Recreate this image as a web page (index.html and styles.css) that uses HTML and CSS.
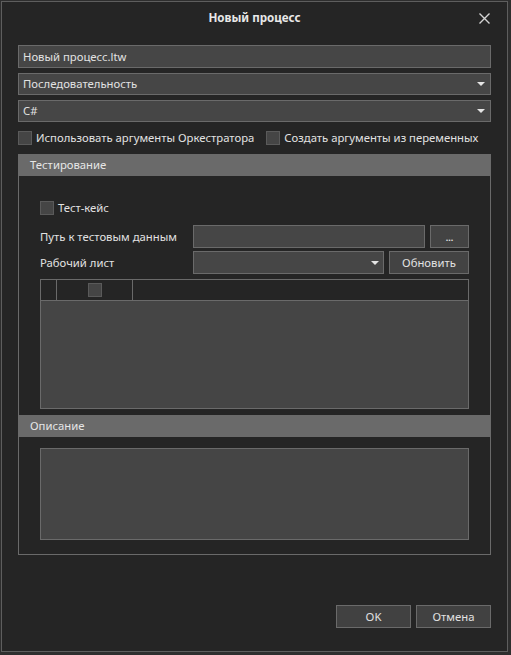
FILE: index.html
```html
<!DOCTYPE html>
<html lang="ru">
<head>
<meta charset="utf-8">
<title>Новый процесс</title>
<link rel="stylesheet" href="styles.css">
</head>
<body>
<div class="dialog">
  <div class="titlebar">
    <span class="title">Новый процесс</span>
    <span class="close"><svg width="11" height="11" viewBox="0 0 11 11"><path d="M0.5 0.5 L10.5 10.5 M10.5 0.5 L0.5 10.5" stroke="#d4d4d4" stroke-width="1.4" fill="none"/></svg></span>
  </div>
  <div class="content">
    <div class="field">Новый процесс.ltw</div>
    <div class="field select gap">Последовательность<span class="caret"></span></div>
    <div class="field select gap">C#<span class="caret"></span></div>
    <div class="checks">
      <div class="check"><span class="box"></span>Использовать аргументы Оркестратора</div>
      <div class="check"><span class="box"></span>Создать аргументы из переменных</div>
    </div>
    <div class="group">
      <div class="group-head">Тестирование</div>
      <div class="group-body testing">
        <div class="check"><span class="box"></span>Тест-кейс</div>
        <div class="row first">
          <span class="lbl">Путь к тестовым данным</span>
          <div class="field input"></div>
          <div class="btn dots">...</div>
        </div>
        <div class="row second">
          <span class="lbl">Рабочий лист</span>
          <div class="field select input"><span class="caret"></span></div>
          <div class="btn refresh">Обновить</div>
        </div>
        <div class="grid">
          <div class="grid-head">
            <div class="gc gc1"></div>
            <div class="gc gc2"><span class="box"></span></div>
            <div class="gc gc3"></div>
          </div>
          <div class="grid-body"></div>
        </div>
      </div>
      <div class="group-head desc-head">Описание</div>
      <div class="group-body description">
        <div class="desc"></div>
      </div>
    </div>
    <div class="footer">
      <div class="btn action">OK</div>
      <div class="btn action">Отмена</div>
    </div>
  </div>
</div>
</body>
</html>
```
FILE: styles.css
```css
* { box-sizing: border-box; }
html, body { margin: 0; padding: 0; }
body {
  background: #2e2e2e;
  width: 511px;
  height: 655px;
  overflow: hidden;
  font-family: "Noto Sans", "Open Sans", sans-serif;
  font-size: 11.3px;
  color: #e2e2e2;
}
.dialog {
  margin: 1px 0 0 1px;
  width: 507px;
  height: 651px;
  border: 1px solid #5e5e5e;
  background: #252525;
  display: flex;
  flex-direction: column;
}
.titlebar {
  height: 31px;
  display: flex;
  align-items: center;
  justify-content: center;
  position: relative;
}
.title {
  font-weight: bold;
  font-size: 11.6px;
  color: #e8e8e8;
}
.close {
  position: absolute;
  right: 17px;
  top: 11px;
  width: 11px;
  height: 11px;
  display: flex;
}
.content {
  flex: 1;
  display: flex;
  flex-direction: column;
  padding: 12px 16px 23px 16px;
}
.field {
  height: 23px;
  border: 1px solid #6a6a6a;
  background: #464646;
  padding: 0 4px;
  line-height: 21px;
  position: relative;
  white-space: nowrap;
}
.select { height: 22px; line-height: 20px; }
.gap { margin-top: 5px; }
.caret {
  position: absolute;
  right: 5px;
  top: 8px;
  width: 0;
  height: 0;
  border-left: 4px solid transparent;
  border-right: 4px solid transparent;
  border-top: 4px solid #e4e4e4;
}
.checks {
  margin-top: 9px;
  display: flex;
  gap: 12px;
  height: 14px;
  align-items: center;
}
.check {
  display: flex;
  align-items: center;
  gap: 4px;
  height: 14px;
  line-height: 14px;
  white-space: nowrap;
}
.box {
  display: inline-block;
  width: 14px;
  height: 14px;
  background: #454545;
  border: 1px solid #5a5a5a;
  flex: none;
}
.group {
  margin-top: 9px;
  border: 1px solid #6a6a6a;
  display: flex;
  flex-direction: column;
}
.group-head {
  height: 21px;
  background: #6a6a6a;
  padding-left: 11px;
  line-height: 20px;
  color: #e6e6e6;
}
.desc-head { height: 22px; line-height: 22px; }
.group-body { padding: 0 21px; }
.testing { padding-top: 25px; padding-bottom: 6px; }
.row {
  display: flex;
  align-items: center;
  height: 23px;
}
.row.first { margin-top: 10px; }
.row.second { margin-top: 3px; }
.lbl { width: 153px; flex: none; white-space: nowrap; }
.row .field { flex: 1; height: 23px; }
.btn {
  height: 23px;
  border: 1px solid #6a6a6a;
  background: #434343;
  text-align: center;
  line-height: 21px;
  margin-left: 5px;
  flex: none;
}
.dots { width: 39px; line-height: 24px; font-size: 9px; font-weight: bold; }
.refresh { width: 80px; }
.row .select .caret { top: 9px; right: 4px; }
.grid {
  margin-top: 5px;
  height: 130px;
  border: 1px solid #6a6a6a;
  display: flex;
  flex-direction: column;
}
.grid-head {
  height: 21px;
  display: flex;
  border-bottom: 1px solid #6a6a6a;
  background: #252525;
  flex: none;
}
.gc { height: 100%; }
.gc1 { width: 16px; border-right: 1px solid #6a6a6a; }
.gc2 {
  width: 76px;
  border-right: 1px solid #6a6a6a;
  display: flex;
  align-items: center;
  justify-content: center;
}
.gc3 { flex: 1; }
.grid-body { flex: 1; background: #454545; }
.description { padding-top: 11px; padding-bottom: 14px; }
.desc {
  height: 92px;
  border: 1px solid #6a6a6a;
  background: #454545;
}
.footer {
  margin-top: auto;
  display: flex;
  justify-content: flex-end;
}
.action {
  width: 75px;
  height: 23px;
  line-height: 21px;
  background: #414141;
}
```
